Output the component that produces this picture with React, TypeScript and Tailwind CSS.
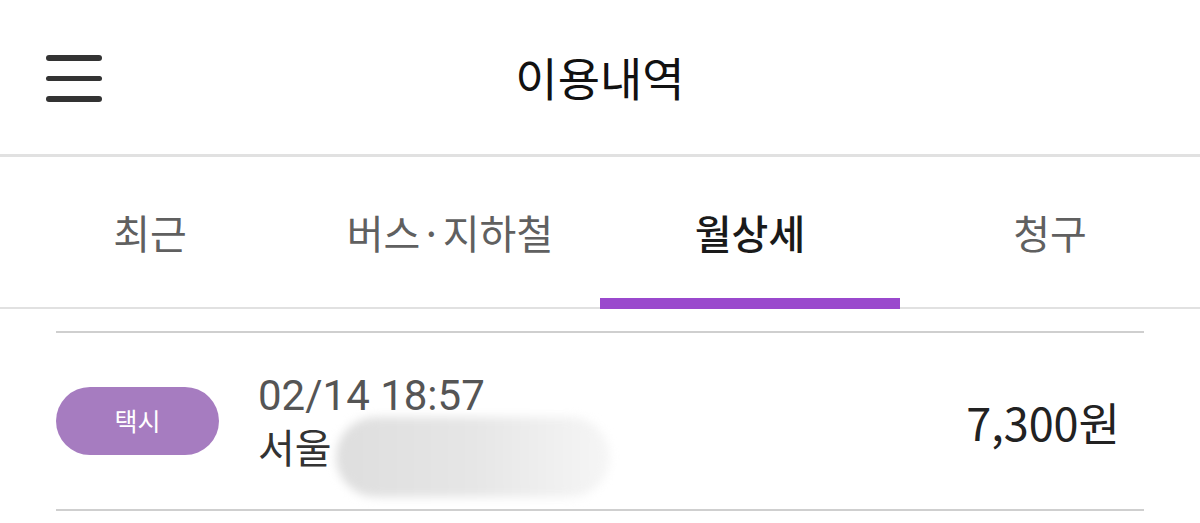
import React from 'react';

const tabs = ['최근', '버스·지하철', '월상세', '청구'];

const App: React.FC = () => {
  const active = 2;
  return (
    <div className="w-[1200px] h-[523px] bg-white overflow-hidden font-['Noto_Sans_CJK_KR','Noto_Sans',sans-serif]">
      {/* header */}
      <header className="relative h-[157px] border-b-[3px] border-[#e1e1e1] flex items-center justify-center">
        <button className="absolute left-[46px] top-[55px] flex flex-col gap-[15px]">
          <span className="block w-[56px] h-[5.5px] rounded-full bg-[#333]" />
          <span className="block w-[56px] h-[5.5px] rounded-full bg-[#333]" />
          <span className="block w-[56px] h-[5.5px] rounded-full bg-[#333]" />
        </button>
        <h1 className="text-[46px] font-normal text-[#111] leading-none -mt-[2px]">이용내역</h1>
      </header>

      {/* tabs */}
      <nav className="grid grid-cols-4 h-[152px] border-b-[2px] border-[#e1e1e1]">
        {tabs.map((t, i) => (
          <div key={t} className="relative flex items-center justify-center">
            <span
              className={
                i === active
                  ? 'text-[40px] font-medium text-[#1a1a1a] leading-none'
                  : 'text-[40px] font-normal text-[#606060] leading-none'
              }
            >
              {t}
            </span>
            {i === active && <span className="absolute left-0 right-0 -bottom-[2px] h-[11px] bg-[#9a48cd]" />}
          </div>
        ))}
      </nav>

      {/* list */}
      <div className="mx-[56px] mt-[22px] border-t-[2px] border-[#cfcfcf]">
        <div className="h-[178px] flex items-center border-b-[2px] border-[#cfcfcf]">
          <div className="w-[163px] h-[68px] rounded-full bg-[#a67cc0] flex items-center justify-center">
            <span className="text-white text-[25px] font-normal">택시</span>
          </div>
          <div className="ml-[39px] flex flex-col">
            <span className="font-['Roboto',sans-serif] text-[42px] leading-[50px] text-[#555]">02/14 18:57</span>
            <span className="relative text-[40px] leading-[50px] text-[#333]">
              서울
              <span className="absolute left-[78px] top-[-4px] w-[274px] h-[80px] rounded-full bg-gradient-to-r from-[#dedede] via-[#e6e6e6] to-[#f6f6f6] blur-[5px]" />
            </span>
          </div>
          <span className="ml-auto mr-[24px] text-[45px] text-[#222] leading-none">7,300원</span>
        </div>
      </div>
    </div>
  );
};

export default App;
